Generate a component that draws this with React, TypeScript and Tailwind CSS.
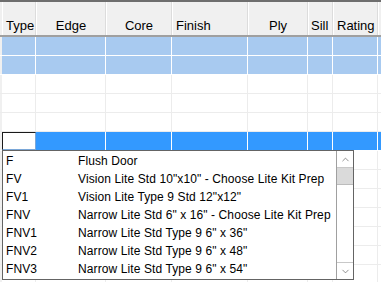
import { ChevronDown, ChevronUp } from 'lucide-react';

interface Column {
  name: string,
  width: string,
  align: string,
}

const columns: Column[] = [
  { name: 'Type', width: 'w-[34px]', align: 'justify-start pl-[3px]' },
  { name: 'Edge', width: 'w-[70px]', align: 'justify-center' },
  { name: 'Core', width: 'w-[66px]', align: 'justify-center' },
  { name: 'Finish', width: 'w-[76px]', align: 'justify-start pl-[3px]' },
  { name: 'Ply', width: 'w-[60px]', align: 'justify-center' },
  { name: 'Sill', width: 'w-[25px]', align: 'justify-start pl-[2px]' },
  { name: 'Rating', width: 'w-[45px]', align: 'justify-start pl-[3px]' },
  { name: '', width: 'w-[20px]', align: 'justify-start' },
];

const options = [
  { code: 'F', label: 'Flush Door' },
  { code: 'FV', label: 'Vision Lite Std 10"x10" - Choose Lite Kit Prep' },
  { code: 'FV1', label: 'Vision Lite Type 9 Std 12"x12"' },
  { code: 'FNV', label: 'Narrow Lite Std 6" x 16" - Choose Lite Kit Prep' },
  { code: 'FNV1', label: 'Narrow Lite Std Type 9 6" x 36"' },
  { code: 'FNV2', label: 'Narrow Lite Std Type 9 6" x 48"' },
  { code: 'FNV3', label: 'Narrow Lite Std Type 9 6" x 54"' },
];

type RowKind = 'selected' | 'empty' | 'active';

const rows: RowKind[] = [
  'selected', 'selected', 'empty', 'empty', 'empty', 'active',
  'empty', 'empty', 'empty', 'empty', 'empty', 'empty', 'empty',
];

function GridRow({ kind }: { kind: RowKind }) {
  const bg = kind === 'selected' ? 'bg-[#a8caf0]' : kind === 'active' ? 'bg-[#3399ff]' : 'bg-white';
  const line = kind === 'empty' ? 'border-[#ececec]' : 'border-white';

  return (
    <div className={ `flex h-[19px] border-b ${line} ${bg}` }>
      <div className="w-[2px] shrink-0 bg-[#f0f0f0]" />
      { columns.map((col, i) => (
        <div key={ col.name + i } className={ `${col.width} shrink-0 border-r ${line}` }>
          { kind === 'active' && i === 0 && (
            <div className="h-[18px] w-[34px] border border-[#1a1a1a] border-r-[#7aa7d8] border-b-[#7aa7d8] bg-white" />
          ) }
        </div>
      )) }
    </div>
  );
}

export default function App() {
  return (
    <div className="relative w-[381px] h-[282px] overflow-hidden bg-white font-['Liberation_Sans',Arial,sans-serif] text-black">
      <div className="flex h-[37px] bg-[#f0f0f0] border-t-2 border-t-[#6e6e6e] border-b-2 border-b-[#a0a0a0]">
        <div className="w-[2px] shrink-0" />
        { columns.map((col, i) => (
          <div
            key={ col.name + i }
            className={ `${col.width} shrink-0 flex items-end pb-[1px] text-[13px] leading-[16px] border-r border-r-[#dcdcdc] border-l border-l-white ${col.align}` }
          >
            { col.name }
          </div>
        )) }
      </div>

      { rows.map((kind, i) => <GridRow key={ i } kind={ kind } />) }

      <div className="absolute left-[2px] top-[150px] w-[352px] h-[130px] flex border border-[#646464] bg-white">
        <div className="flex-1 pt-[1px] text-[12px] tracking-[0.1px]">
          { options.map((opt) => (
            <div key={ opt.code } className="flex h-[18px] items-center">
              <span className="w-[75px] shrink-0 pl-[3px]">{ opt.code }</span>
              <span className="whitespace-nowrap">{ opt.label }</span>
            </div>
          )) }
        </div>
        <div className="w-[17px] flex flex-col border-l border-[#a0a0a0] bg-white">
          <div className="h-[17px] flex items-center justify-center border-b border-[#c8c8c8]">
            <ChevronUp size={ 11 } strokeWidth={ 1.5 } color="#606060" />
          </div>
          <div className="h-[17px] bg-[#dadada] border-b border-[#bcbcbc]" />
          <div className="flex-1" />
          <div className="h-[17px] flex items-center justify-center border-t border-[#c8c8c8]">
            <ChevronDown size={ 11 } strokeWidth={ 1.5 } color="#606060" />
          </div>
        </div>
      </div>
    </div>
  );
}
